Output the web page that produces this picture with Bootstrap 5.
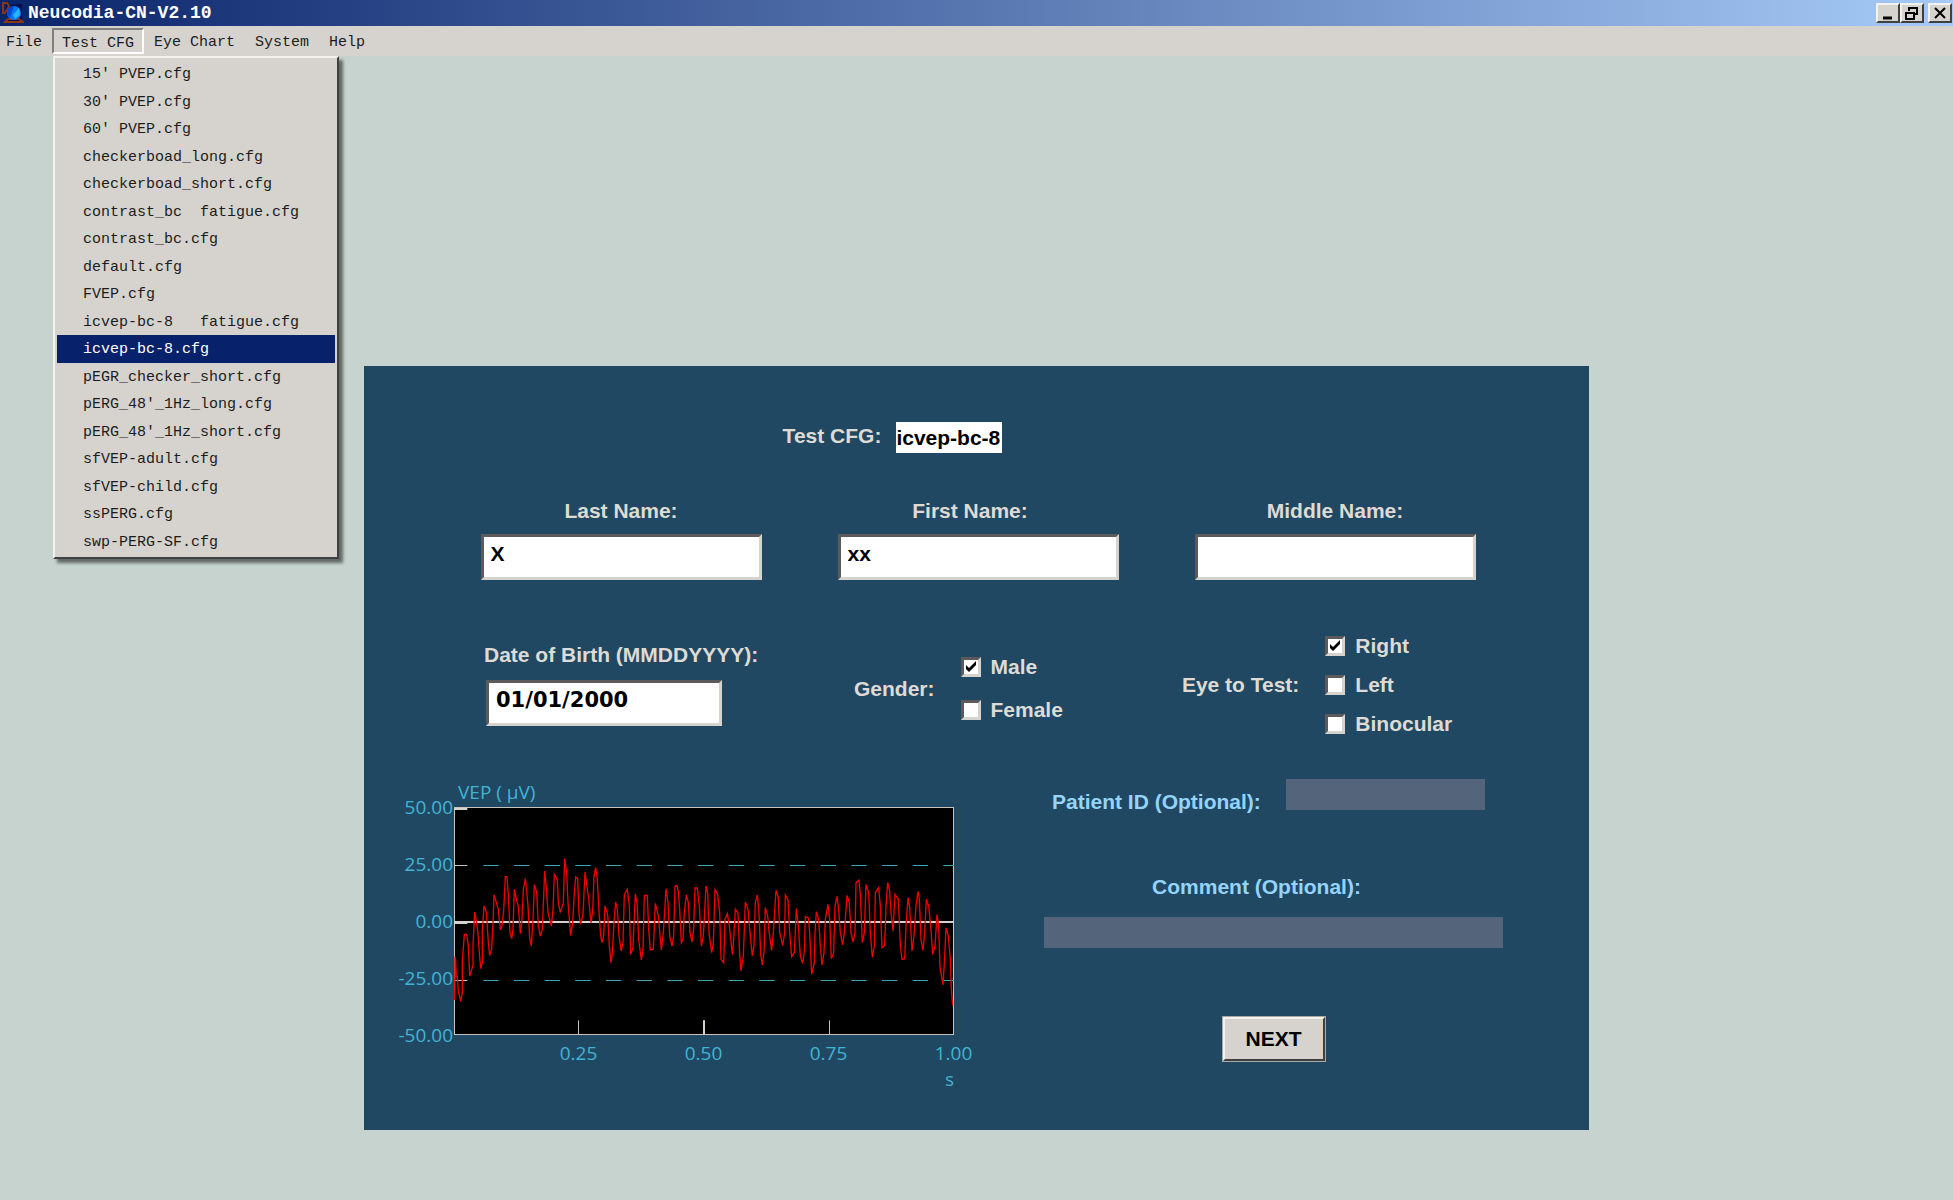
<!DOCTYPE html>
<html lang="en">
<head>
<meta charset="utf-8">
<meta name="viewport" content="width=device-width, initial-scale=1">
<title>Neucodia-CN-V2.10</title>
<link href="https://cdn.jsdelivr.net/npm/bootstrap@5.3.0/dist/css/bootstrap.min.css" rel="stylesheet">
<style>
  :root { --face: #d6d3ce; --navy: #08216b; --ink: #dedbd4; --sky: #94d4fa; --cyan: #40b4d4; }
  body { background: #c7d3cf; font-family: "Liberation Sans", Arial, sans-serif; min-height: 100vh; }

  /* window frame */
  .title-strip { height: 26px; background: linear-gradient(90deg, #0a246a, #a6caf7); padding: 0 1px 0 2px; }
  .title-text { font: bold 18px/24px "Liberation Mono", monospace; color: #fff; margin: 0; }
  .win-btn { width: 24px; height: 20px; padding: 0; background: var(--face); border: 2px solid; border-color: #f4f2ee #404040 #404040 #f4f2ee; border-radius: 0; line-height: 0; }
  .menu-strip { height: 30px; background: var(--face); padding: 2px 0 2px 6px; font: 15px/22px "Liberation Mono", monospace; }
  .menu-strip .nav-link { color: #1c1c1c; padding: 4px 10px 0; height: 26px; }
  .menu-strip .nav-item:first-child .nav-link { padding-left: 0; }
  .menu-strip .nav-link.show { border: 2px solid; border-color: #808080 #fff #fff #808080; padding: 3px 8px 0; }
  .cfg-menu { top: 28px; left: 1px; width: 286px; height: 503px; margin: 0; padding: 2px; background: var(--face); border: 2px solid; border-color: #f4f2ee #404040 #404040 #f4f2ee; border-radius: 0; box-shadow: 4px 4px 3px rgba(0,0,0,.5); font-size: 15px; }
  .cfg-menu.show { display: flex; }
  .cfg-menu .dropdown-item { color: #1c1c1c; white-space: pre; padding: 2px 26px 0; line-height: 25px; }
  .cfg-menu .dropdown-item.active { background: var(--navy); color: #fff; }

  /* patient form */
  .patient-panel { width: 100%; max-width: 1225px; margin: 310px auto 0; padding: 56px 0 38px; background: #214862; color: var(--ink); }
  .patient-panel label, .group-title { font-weight: bold; font-size: 21px; line-height: 28px; white-space: nowrap; }
  .cfg-row { padding-right: 168px; gap: 15px; }
  .cfg-value { width: 106px; height: 31px; padding: 0; border: 0; background: #fff; color: #000; font-weight: bold; font-size: 21px; }
  .name-row { gap: 76px; margin-top: 44px; padding-left: 3px; }
  .name-row > div { width: 281px; }
  .name-row label { margin-bottom: 9px; }
  .sunken { height: 46px; width: 100%; border: 3px solid; border-color: #5c5a5a var(--face) var(--face) #5c5a5a; border-radius: 0; background: #fff; color: #000; font-weight: bold; font-size: 21px; line-height: 24px; padding: 2px 7px 8px; }
  .sunken:focus { box-shadow: none; }
  .detail-row { margin-top: 52px; padding-left: 120px; }
  .dob-field { margin-top: 9px; width: 274px; }
  .dob-field label { margin-bottom: 11px; }
  .dob-field .sunken { width: 236px; margin-left: 2px; font-family: "DejaVu Sans", sans-serif; }
  .gender-set { margin: 21px 0 0 96px; gap: 26px; }
  .gender-set .choices { gap: 15px; }
  .eye-set { margin-left: 119px; gap: 26px; }
  .eye-set .choices { gap: 11px; }
  .choice { display: flex; align-items: center; gap: 10px; }
  .choice .form-check-input { width: 20px; height: 20px; margin: 0; border: 3px solid; border-color: #5c5a5a var(--face) var(--face) #5c5a5a; border-radius: 0; background-color: #fff; }
  .choice .form-check-input:checked { background-color: #fff; border-color: #5c5a5a var(--face) var(--face) #5c5a5a; background-image: url("data:image/svg+xml,%3Csvg xmlns='http://www.w3.org/2000/svg' viewBox='0 0 14 14'%3E%3Cpath d='M2 5v4l3 3 7-7V1L5 8z'/%3E%3C/svg%3E"); }

  /* signal chart */
  .lower-row { margin-top: 41px; padding-left: 32px; }
  .chart-area { font: 19px/26px "Open Sans", sans-serif; color: var(--cyan); }
  .y-scale { width: 58px; height: 254px; margin-top: 15px; padding-right: 1px; text-align: right; }
  .plot-col { width: 500px; }
  .plot-title { padding-left: 4px; margin-bottom: 2px; }
  .plot-box { display: block; width: 100%; height: 228px; margin-bottom: 5px; }
  .x-scale { margin: 0 -62px 0 62px; }
  .optional-col { width: 459px; margin-left: 90px; color: var(--sky); }
  .optional-col label { margin-top: 9px; }
  .flat-input { height: 31px; border: 0; border-radius: 0; background: #54657b; color: #fff; }
  .id-input { width: 199px; }
  .id-row { padding: 0 18px 0 8px; }
  .comment-row { margin-top: 48px; }
  .comment-row label { margin-bottom: 16px; padding-right: 34px; }
  .next-btn { width: 104px; height: 46px; margin-top: 68px; padding: 0; border: 3px solid; border-color: #f4f2ee #404040 #404040 #f4f2ee; border-radius: 0; outline: 1px solid #a9a9a6; outline-offset: -1px; background: var(--face); color: #000; font-weight: bold; font-size: 21px; line-height: 28px; }
</style>
<script src="https://cdn.jsdelivr.net/npm/bootstrap@5.3.0/dist/js/bootstrap.bundle.min.js"></script>
</head>
<body>
<header>
  <div class="title-strip d-flex align-items-center">
    <svg class="flex-shrink-0 me-1" width="22" height="24" viewBox="0 0 22 24" aria-hidden="true">
      <path d="M4 4l16-1v17H6z" fill="#04104c"/>
      <path d="M1 13V2h4l2 3-2 4-3 4M3 21l3-3h11l4 3z" fill="none" stroke="#8a3418" stroke-width="2"/>
      <circle cx="12" cy="12" r="7" fill="#0a78f8"/>
      <path d="M12 5a7 7 0 0 0-7 7l3 5z" fill="#0848d0"/>
      <path d="M11 14l6-7 1 7-5 4z" fill="#28b4ff"/>
    </svg>
    <h1 class="title-text">Neucodia-CN-V2.10</h1>
    <div class="d-flex ms-auto">
      <button class="win-btn" type="button" aria-label="Minimize"><svg width="20" height="16" viewBox="0 0 20 16"><path d="M5 13h9" stroke="#000" stroke-width="3"/></svg></button>
      <button class="win-btn me-1" type="button" aria-label="Restore"><svg width="20" height="16" viewBox="0 0 20 16"><path d="M7 6V3h8v6h-3M7 3h8M4 8h8v6H4zM4 8h8" fill="none" stroke="#000" stroke-width="2"/></svg></button>
      <button class="win-btn" type="button" aria-label="Close"><svg width="20" height="16" viewBox="0 0 20 16"><path d="M5 3l10 10M15 3L5 13" stroke="#000" stroke-width="2"/></svg></button>
    </div>
  </div>
  <nav class="menu-strip">
    <ul class="nav flex-nowrap">
      <li class="nav-item"><a class="nav-link" href="#">File</a></li>
      <li class="nav-item dropdown">
        <a class="nav-link show" href="#" role="button" aria-expanded="true">Test CFG</a>
        <div class="dropdown-menu show cfg-menu flex-column">
          <a class="dropdown-item flex-fill" href="#">15′ PVEP.cfg</a>
          <a class="dropdown-item flex-fill" href="#">30′ PVEP.cfg</a>
          <a class="dropdown-item flex-fill" href="#">60′ PVEP.cfg</a>
          <a class="dropdown-item flex-fill" href="#">checkerboad_long.cfg</a>
          <a class="dropdown-item flex-fill" href="#">checkerboad_short.cfg</a>
          <a class="dropdown-item flex-fill" href="#">contrast_bc  fatigue.cfg</a>
          <a class="dropdown-item flex-fill" href="#">contrast_bc.cfg</a>
          <a class="dropdown-item flex-fill" href="#">default.cfg</a>
          <a class="dropdown-item flex-fill" href="#">FVEP.cfg</a>
          <a class="dropdown-item flex-fill" href="#">icvep-bc-8   fatigue.cfg</a>
          <a class="dropdown-item flex-fill active" href="#">icvep-bc-8.cfg</a>
          <a class="dropdown-item flex-fill" href="#">pEGR_checker_short.cfg</a>
          <a class="dropdown-item flex-fill" href="#">pERG_48'_1Hz_long.cfg</a>
          <a class="dropdown-item flex-fill" href="#">pERG_48'_1Hz_short.cfg</a>
          <a class="dropdown-item flex-fill" href="#">sfVEP-adult.cfg</a>
          <a class="dropdown-item flex-fill" href="#">sfVEP-child.cfg</a>
          <a class="dropdown-item flex-fill" href="#">ssPERG.cfg</a>
          <a class="dropdown-item flex-fill" href="#">swp-PERG-SF.cfg</a>
        </div>
      </li>
      <li class="nav-item"><a class="nav-link" href="#">Eye Chart</a></li>
      <li class="nav-item"><a class="nav-link" href="#">System</a></li>
      <li class="nav-item"><a class="nav-link" href="#">Help</a></li>
    </ul>
  </nav>
</header>

<main>
  <form class="patient-panel">
    <div class="cfg-row d-flex justify-content-center align-items-start">
      <label for="cfg">Test CFG:</label>
      <input class="cfg-value" id="cfg" type="text" value="icvep-bc-8" readonly>
    </div>

    <div class="name-row d-flex justify-content-center">
      <div class="text-center"><label for="last">Last Name:</label><input class="form-control sunken" id="last" type="text" value="X"></div>
      <div class="text-center"><label class="pe-3" for="first">First Name:</label><input class="form-control sunken" id="first" type="text" value="xx"></div>
      <div class="text-center"><label for="middle">Middle Name:</label><input class="form-control sunken" id="middle" type="text"></div>
    </div>

    <div class="detail-row d-flex align-items-start">
      <div class="dob-field"><label for="dob">Date of Birth (MMDDYYYY):</label><input class="form-control sunken" id="dob" type="text" value="01/01/2000"></div>
      <div class="gender-set d-flex align-items-center" role="group" aria-labelledby="gender-title">
        <span class="group-title" id="gender-title">Gender:</span>
        <div class="choices d-flex flex-column">
          <div class="choice"><input class="form-check-input" type="checkbox" id="male" checked><label for="male">Male</label></div>
          <div class="choice"><input class="form-check-input" type="checkbox" id="female"><label for="female">Female</label></div>
        </div>
      </div>
      <div class="eye-set d-flex align-items-center" role="group" aria-labelledby="eye-title">
        <span class="group-title" id="eye-title">Eye to Test:</span>
        <div class="choices d-flex flex-column">
          <div class="choice"><input class="form-check-input" type="checkbox" id="right" checked><label for="right">Right</label></div>
          <div class="choice"><input class="form-check-input" type="checkbox" id="left"><label for="left">Left</label></div>
          <div class="choice"><input class="form-check-input" type="checkbox" id="both"><label for="both">Binocular</label></div>
        </div>
      </div>
    </div>

    <div class="lower-row d-flex align-items-start">
      <div class="chart-area d-flex align-items-start">
        <div class="y-scale d-flex flex-column justify-content-between">
          <span>50.00</span><span>25.00</span><span>0.00</span><span>-25.00</span><span>-50.00</span>
        </div>
        <div class="plot-col">
          <div class="plot-title">VEP ( μV)</div>
          <svg class="plot-box" viewBox="284 143 1500 684" preserveAspectRatio="none" role="img" aria-label="VEP signal">
            <rect x="285.500" y="144.500" width="1497" height="681" fill="#000" stroke="#c6c3bd" stroke-width="3"/>
            <path d="M372 318.500H1784M372 663.500H1784" stroke="#38a8b4" stroke-width="3" stroke-dasharray="46 46"/>
            <path d="M284 318.500h40M284 663.500h40M657.500 783v43M1410.500 783v43" stroke="#c6c3bd" stroke-width="3"/>
            <path d="M284 488H1784M284 149h40M284 491h40M1034 783v43" stroke="#d6d3ce" stroke-width="6"/>
            <g fill="none" stroke="#f00000" stroke-width="4">
              <polyline points="286,722 287,592 289,605 291,652 294,652 297,697 301,712 304,726 309,700 309,605 315,525 322,525 327,560 331,650 335,638 341,617 341,560 346,458 352,490 356,522 360,580 364,628 369,610 369,515 374,440 381,458 387,550 391,588 397,570 401,490 404,407 411,430 417,450 423,512 428,500 433,455 438,352 443,352 448,425 452,520 457,538 461,510 465,390 471,420 477,440 483,523 488,480 492,390 498,358 502,395 506,440 511,535 516,560 521,480 525,376 532,398 537,500 543,530 549,510 553,410 556,335 561,385 566,460 576,500 581,450 585,345 594,362 597,430 603,460 612,430 614,360 616,298 622,340 626,430 634,528 640,490 645,400 649,353 655,358 659,465 664,495 671,465 677,338 681,365 687,410 695,490 700,455 704,350 709,325 714,360 718,440 724,530 728,550 733,530 737,440 745,465 750,560 755,610 759,580 764,490 769,428 774,450 779,530 786,575 791,550 795,405 804,390 810,440 814,585 821,565 828,403 834,440 838,540 846,602 851,570 855,408 864,408 868,510 873,572 882,570 888,432 897,470 906,572 912,520 920,388 926,430 931,530 938,560 943,530 947,380 953,378 957,397"/>
              <polyline transform="translate(930)" points="27,397 31,450 36,550 41,540 45,460 51,407 57,430 62,520 68,548 73,510 77,386 84,386 90,440 96,560 102,530 110,380 115,400 119,520 127,580 132,550 137,390 145,405 151,460 155,600 163,610 167,480 174,463 180,500 189,585 193,540 198,450 206,462 211,585 215,635 222,590 228,428 236,450 242,520 249,590 254,560 258,430 264,407 269,460 274,585 279,617 284,580 288,445 295,470 299,515 307,573 312,520 320,393 327,415 331,520 340,558 346,520 348,407 356,422 361,520 367,592 375,580 381,448 387,500 393,590 400,612 405,575 408,472 417,475 421,520 427,645 435,610 437,520 441,457 448,480 453,560 458,617 464,580 468,480 476,435 481,480 486,598 493,580 497,440 503,411 508,450 513,520 520,557 525,520 533,408 540,430 545,520 551,548 557,520 560,370 569,362 573,405 579,550 585,520 590,375 598,400 603,520 609,594 615,560 618,400 628,385 633,440 638,565 646,558 650,440 655,370 661,395 665,460 671,515 677,405 687,420 693,560 698,600 706,598 710,500 716,415 721,445 728,575 734,530 740,440 746,396 750,420 755,540 761,573 766,520 771,420 778,440 784,500 790,585 797,560 803,466 808,500 812,625 821,677 825,610 830,505 837,530 843,600 846,690 850,738"/>
            </g>
          </svg>
          <div class="x-scale d-flex text-center">
            <span class="col">0.25</span><span class="col">0.50</span><span class="col">0.75</span><span class="col">1.00</span>
          </div>
          <div class="text-end">s</div>
        </div>
      </div>

      <div class="optional-col d-flex flex-column">
        <div class="id-row d-flex align-items-start justify-content-between">
          <label for="pid">Patient ID (Optional):</label>
          <input class="flat-input id-input" id="pid" type="text">
        </div>
        <div class="comment-row d-flex flex-column text-center">
          <label for="comment">Comment (Optional):</label>
          <input class="flat-input w-100" id="comment" type="text">
        </div>
        <button class="btn next-btn align-self-center" type="button">NEXT</button>
      </div>
    </div>
  </form>
</main>
</body>
</html>
